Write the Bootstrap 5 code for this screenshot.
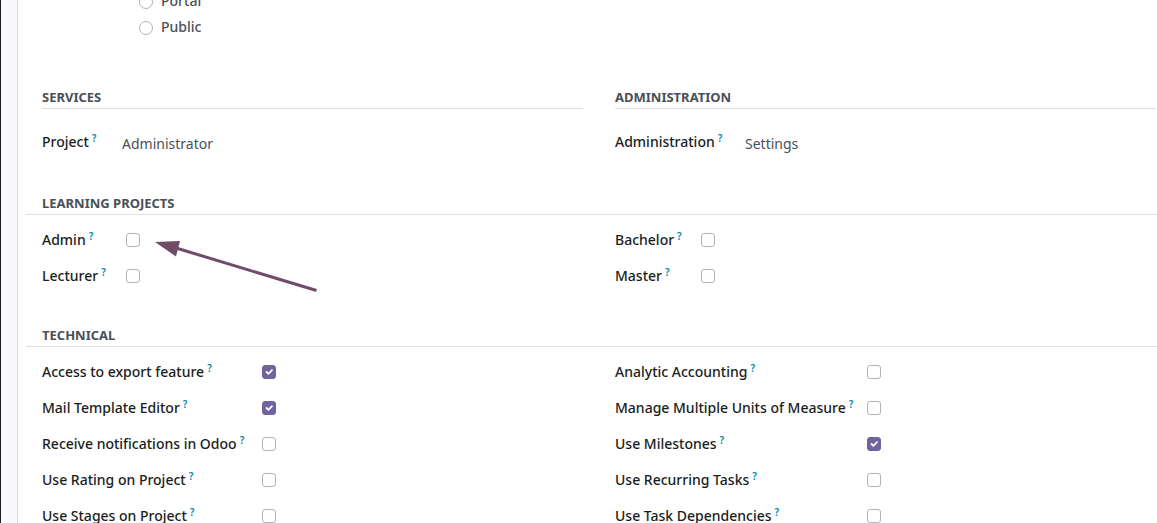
<!DOCTYPE html>
<html lang="en">
<head>
<meta charset="utf-8">
<meta name="viewport" content="width=device-width, initial-scale=1">
<title>Access Rights</title>
<link href="https://cdn.jsdelivr.net/npm/bootstrap@5.3.0/dist/css/bootstrap.min.css" rel="stylesheet">
<style>
  body { font-family: "Noto Sans", sans-serif; font-size: 14px; line-height: 20px; color: #1a1d21; background: #f8f9fc; }
  .viewport { height: 100vh; border-left: 1px solid #1f1b28; padding-left: 16px; }
  .sheet { border-left: 1px solid #d9dbe3; padding-left: 24px; padding-right: 1px; min-height: 100%; }
  /* the form is scrolled part of the way down */
  .scrolled { margin-top: -11px; }
  .radio-row { height: 26px; margin-left: 97px; gap: 8px; font-weight: 500; color: #495057; }
  .radio-row label { padding-bottom: 2px; }
  .form-check-input { width: 14px; height: 14px; margin: 0; border-color: #b3b3b3; flex: none; }
  .form-check-input[type=checkbox] { border-radius: 3px; }
  .form-check-input:checked { background-color: #71639e; border-color: #71639e; background-size: 12px; }
  .group-title { font-size: 13px; line-height: 18px; padding-bottom: 2px; font-weight: 700; color: #495057; text-transform: uppercase; border-bottom: 1px solid #e0e1e4; margin: 0; }
  .wide-title { margin-left: -16px; margin-right: -1px; padding-left: 16px; }
  .two-cols { display: grid; grid-template-columns: 1fr 1fr; column-gap: 32px; }
  .top-group { margin-top: 47px; }
  .top-group .field-row { margin-top: 15px; }
  .second-group { margin-top: 34px; }
  .third-group { margin-top: 32px; }
  .fields { margin-top: 7px; }
  .field-row { display: flex; align-items: center; height: 36px; }
  .field-row label { flex: none; width: var(--label-width); font-weight: 500; white-space: nowrap; }
  .field-row sup { font-size: 10px; font-weight: 600; color: #0187b0; margin-left: 3px; top: -5px; line-height: 0; }
  .field-value { color: #495057; padding-top: 4px; }
  .w-project { --label-width: 80px; }
  .w-administration { --label-width: 130px; }
  .w-role { --label-width: 84px; }
  .w-degree { --label-width: 86px; }
  .w-feature { --label-width: 220px; }
  .w-option { --label-width: 252px; }
  .pointer { left: 112px; top: 18px; pointer-events: none; }
</style>
</head>
<body>
<div class="viewport overflow-hidden">
<main class="sheet bg-white overflow-hidden">
  <form class="scrolled">
    <div class="radio-row d-flex align-items-center">
      <input class="form-check-input" type="radio" name="type" id="portal"><label for="portal">Portal</label>
    </div>
    <div class="radio-row d-flex align-items-center">
      <input class="form-check-input" type="radio" name="type" id="public"><label for="public">Public</label>
    </div>

    <div class="two-cols top-group">
      <section class="w-project">
        <h2 class="group-title">Services</h2>
        <div class="field-row"><label for="project">Project<sup>?</sup></label><output class="field-value" id="project">Administrator</output></div>
      </section>
      <section class="w-administration">
        <h2 class="group-title">Administration</h2>
        <div class="field-row"><label for="administration">Administration<sup>?</sup></label><output class="field-value" id="administration">Settings</output></div>
      </section>
    </div>

    <section class="second-group">
      <h2 class="group-title wide-title">Learning Projects</h2>
      <div class="two-cols fields">
        <div class="w-role position-relative">
          <div class="field-row"><label for="admin">Admin<sup>?</sup></label><input class="form-check-input" type="checkbox" id="admin"></div>
          <div class="field-row"><label for="lecturer">Lecturer<sup>?</sup></label><input class="form-check-input" type="checkbox" id="lecturer"></div>
          <svg class="pointer position-absolute" width="166" height="54" viewBox="0 0 166 54" aria-hidden="true">
            <path d="M22 8 162.500 50.500" stroke="#714b67" stroke-width="3" fill="none"/>
            <path d="M1 2 26 1 22 16.500Z" fill="#714b67"/>
          </svg>
        </div>
        <div class="w-degree">
          <div class="field-row"><label for="bachelor">Bachelor<sup>?</sup></label><input class="form-check-input" type="checkbox" id="bachelor"></div>
          <div class="field-row"><label for="master">Master<sup>?</sup></label><input class="form-check-input" type="checkbox" id="master"></div>
        </div>
      </div>
    </section>

    <section class="third-group">
      <h2 class="group-title wide-title">Technical</h2>
      <div class="two-cols fields">
        <div class="w-feature">
          <div class="field-row"><label for="export">Access to export feature<sup>?</sup></label><input class="form-check-input" type="checkbox" id="export" checked></div>
          <div class="field-row"><label for="mail">Mail Template Editor<sup>?</sup></label><input class="form-check-input" type="checkbox" id="mail" checked></div>
          <div class="field-row"><label for="notify">Receive notifications in Odoo<sup>?</sup></label><input class="form-check-input" type="checkbox" id="notify"></div>
          <div class="field-row"><label for="rating">Use Rating on Project<sup>?</sup></label><input class="form-check-input" type="checkbox" id="rating"></div>
          <div class="field-row"><label for="stages">Use Stages on Project<sup>?</sup></label><input class="form-check-input" type="checkbox" id="stages"></div>
        </div>
        <div class="w-option">
          <div class="field-row"><label for="analytic">Analytic Accounting<sup>?</sup></label><input class="form-check-input" type="checkbox" id="analytic"></div>
          <div class="field-row"><label for="units">Manage Multiple Units of Measure<sup>?</sup></label><input class="form-check-input" type="checkbox" id="units"></div>
          <div class="field-row"><label for="milestones">Use Milestones<sup>?</sup></label><input class="form-check-input" type="checkbox" id="milestones" checked></div>
          <div class="field-row"><label for="recurring">Use Recurring Tasks<sup>?</sup></label><input class="form-check-input" type="checkbox" id="recurring"></div>
          <div class="field-row"><label for="dependencies">Use Task Dependencies<sup>?</sup></label><input class="form-check-input" type="checkbox" id="dependencies"></div>
        </div>
      </div>
    </section>
  </form>
</main>
</div>
<script src="https://cdn.jsdelivr.net/npm/bootstrap@5.3.0/dist/js/bootstrap.bundle.min.js"></script>
</body>
</html>
